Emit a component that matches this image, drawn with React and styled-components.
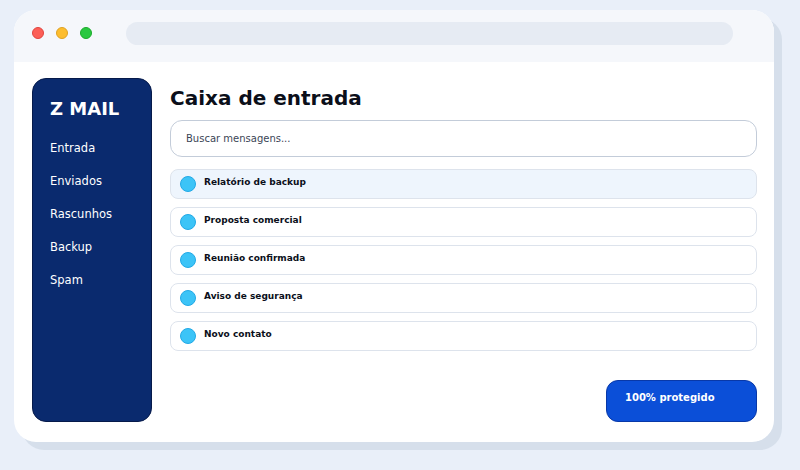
import React from 'react'
import styled, { createGlobalStyle } from 'styled-components'

const GlobalStyle = createGlobalStyle`
	body {
		margin: 0;
		background: #e9eff9;
		font-family: "DejaVu Sans", Verdana, sans-serif;
	}
`;

const Page = styled.div`
	width: 800px;
	height: 470px;
	padding: 10px 0 0 14px;
	box-sizing: border-box;
`;

const Window = styled.div`
	width: 760px;
	height: 432px;
	border-radius: 22px;
	background: #ffffff;
	box-shadow: 8px 8px 0 #d6dfeb;
	overflow: hidden;
	display: flex;
	flex-direction: column;
`;

const TitleBar = styled.div`
	height: 52px;
	box-sizing: border-box;
	background: #f5f7fb;
	display: flex;
	align-items: center;
	padding: 0 41px 6px 18px;
	flex-shrink: 0;
`;

const Dot = styled.span`
	width: 12px;
	height: 12px;
	border-radius: 50%;
	background: ${p => p.color};
	border: 1px solid ${p => p.edge};
	box-sizing: border-box;
	margin-right: 12px;
`;

const AddressBar = styled.div`
	flex: 1;
	height: 23px;
	margin-left: 22px;
	border-radius: 12px;
	background: #e6ebf3;
`;

const Body = styled.div`
	flex: 1;
	display: flex;
	gap: 18px;
	padding: 16px 17px 20px 18px;
`;

const Sidebar = styled.nav`
	width: 120px;
	background: #0a2a6e;
	border: 1px solid #061a4a;
	box-sizing: border-box;
	border-radius: 14px;
	padding: 17px 0 0 17px;
	color: #ffffff;
`;

const Logo = styled.div`
	font-size: 18px;
	font-weight: bold;
	line-height: 26px;
	margin-bottom: 19px;
`;

const NavItem = styled.div`
	font-size: 11.5px;
	line-height: 14px;
	margin-bottom: 19px;
`;

const Main = styled.main`
	flex: 1;
	display: flex;
	flex-direction: column;
`;

const Heading = styled.h1`
	margin: 7px 0 0;
	font-size: 20px;
	line-height: 26px;
	font-weight: bold;
	color: #0b0f1a;
`;

const Search = styled.div`
	margin-top: 9px;
	height: 37px;
	border: 1px solid #c3ccd9;
	border-radius: 12px;
	box-sizing: border-box;
	display: flex;
	align-items: center;
	padding-left: 15px;
	font-size: 10px;
	color: #3b4556;
`;

const List = styled.div`
	margin-top: 12px;
	display: flex;
	flex-direction: column;
	gap: 8px;
`;

const Row = styled.div`
	height: 30px;
	box-sizing: border-box;
	border: 1px solid #dde3ec;
	border-radius: 8px;
	background: ${p => (p.$active ? '#eef5fd' : '#ffffff')};
	display: flex;
	align-items: center;
	padding-left: 9px;
	gap: 8px;
`;

const Avatar = styled.span`
	width: 16px;
	height: 16px;
	border-radius: 50%;
	background: #3cc4f7;
	border: 1px solid #22a9e6;
	box-sizing: border-box;
	flex-shrink: 0;
`;

const Subject = styled.span`
	font-size: 9px;
	font-weight: bold;
	color: #0b0f1a;
	margin-bottom: 4px;
`;

const Badge = styled.div`
	margin-top: auto;
	align-self: flex-end;
	width: 151px;
	height: 42px;
	box-sizing: border-box;
	border-radius: 12px;
	background: #0b4fd8;
	border: 1px solid #0838a8;
	color: #ffffff;
	font-size: 10px;
	font-weight: bold;
	padding: 11px 0 0 18px;
`;

const folders = ['Entrada', 'Enviados', 'Rascunhos', 'Backup', 'Spam']
const messages = ['Relatório de backup', 'Proposta comercial', 'Reunião confirmada', 'Aviso de segurança', 'Novo contato']

export default function App() {
	return (
		<Page>
			<GlobalStyle />
			<Window>
				<TitleBar>
					<Dot color='#fc5f57' edge='#e0443e' />
					<Dot color='#fdbd2e' edge='#dea123' />
					<Dot color='#29c840' edge='#1aab29' />
					<AddressBar />
				</TitleBar>
				<Body>
					<Sidebar>
						<Logo>Z MAIL</Logo>
						{folders.map(f => <NavItem key={f}>{f}</NavItem>)}
					</Sidebar>
					<Main>
						<Heading>Caixa de entrada</Heading>
						<Search>Buscar mensagens...</Search>
						<List>
							{messages.map((m, i) => (
								<Row key={m} $active={i === 0}>
									<Avatar />
									<Subject>{m}</Subject>
								</Row>
							))}
						</List>
						<Badge>100% protegido</Badge>
					</Main>
				</Body>
			</Window>
		</Page>
	)
}
